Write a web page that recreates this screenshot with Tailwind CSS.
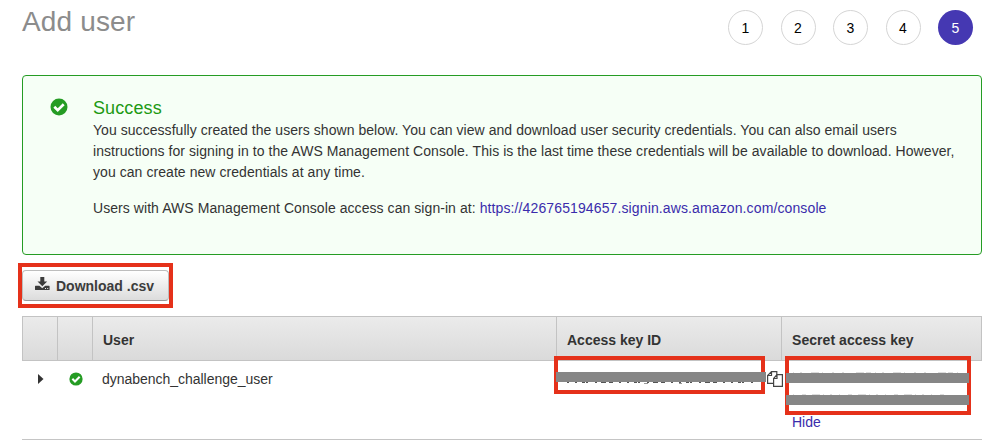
<!DOCTYPE html>
<html lang="en">
<head>
<meta charset="utf-8">
<title>Add user</title>
<script src="https://cdn.jsdelivr.net/npm/@tailwindcss/browser@4"></script>
</head>
<body class="h-[448px] overflow-hidden bg-white font-['Liberation_Sans',Arial,sans-serif] text-[14px] text-[#333]">
<svg class="hidden">
  <symbol id="check" viewBox="0 0 18 18"><circle cx="9" cy="9" r="8.5" fill="#259c24"/><path d="M4.300 8.800 7.700 12.100 13.700 6.200" fill="none" stroke="#fff" stroke-width="2.700"/></symbol>
</svg>
<div class="ml-[22px] w-[960px]">
  <header class="flex h-[75px] items-start justify-between pr-[9px]">
    <h1 class="pt-[6px] text-[28px] leading-[32px] tracking-[0.15px] text-[#8c8c8c]">Add user</h1>
    <ol class="flex gap-[17.5px] pt-[10px] text-black">
      <li class="flex size-[35px] items-center justify-center rounded-full border border-[#d5d5d5] pt-px">1</li>
      <li class="flex size-[35px] items-center justify-center rounded-full border border-[#d5d5d5] pt-px">2</li>
      <li class="flex size-[35px] items-center justify-center rounded-full border border-[#d5d5d5] pt-px">3</li>
      <li class="flex size-[35px] items-center justify-center rounded-full border border-[#d5d5d5] pt-px">4</li>
      <li class="flex size-[35px] items-center justify-center rounded-full bg-[#4538b2] pt-px text-white">5</li>
    </ol>
  </header>
  <section class="flex h-[180px] rounded-[4px] border border-[#259c24] bg-[#f6fff6] pl-[27px]">
    <svg class="mt-[22px] size-[18px] shrink-0"><use href="#check"/></svg>
    <div class="pl-[25px] pt-[21px] leading-[21px] tracking-[0.062px] whitespace-nowrap">
      <h2 class="h-[23px] text-[18px] leading-[22px] tracking-[0.1px] text-[#1c9a12]">Success</h2>
      <p><span class="tracking-[0.052px]">You successfully created the users shown below. You can view and download user security credentials. You can also email users</span><br>instructions for signing in to the AWS Management Console. This is the last time these credentials will be available to download. However,<br>you can create new credentials at any time.</p>
      <p class="mt-[15px]">Users with AWS Management Console access can sign-in at: <a class="tracking-[0.12px] text-[#3a2cac]">https://426765194657.signin.aws.amazon.com/console</a></p>
    </div>
  </section>
  <div class="mt-2 -ml-1 h-[45px] w-[155px] border-4 border-[#e5311a] pt-[3px]">
    <button class="flex h-[31px] w-[147px] items-center rounded-[4px] border border-[#bdbdbd] border-b-[#999] bg-linear-to-b from-white to-[#dcdcdc] pl-[12px] font-bold text-[#3c3c3c]">
      <svg class="mr-[6px] -mt-1 h-[14px] w-[15px]" viewBox="0 0 15 14" fill="#3c3c3c"><path d="M5.300 0h4v4.500h2.900L7.300 9.300 2.500 4.500h2.800z"/><path fill-rule="evenodd" d="M.6 8.800h3.800l2.900 2.400 2.900-2.400h3.800q.6 0 .6.600v3q0 .6-.6.600H.6Q0 13 0 12.400v-3q0-.6.600-.6zM10 11v1h1v-1zm2.200 0v1h1v-1z"/></svg>
      <span class="pt-[2px]">Download .csv</span>
    </button>
  </div>
  <div class="mt-2 border-b border-[#c5c5c5]">
    <div class="grid h-[45px] grid-cols-[35px_35px_464px_225px_201px] overflow-hidden border-y border-r border-[#c3c3c3] bg-linear-to-b from-[#ebebeb] to-[#dadada] text-[14px] leading-[46px] font-bold">
      <div class="border-l border-[#c3c3c3]"></div>
      <div class="border-l border-[#c3c3c3]"></div>
      <div class="border-l border-[#c3c3c3] pl-[10px]">User</div>
      <div class="border-l border-[#c3c3c3] pl-[10px]">Access key ID</div>
      <div class="border-l border-[#c3c3c3] pl-[10px] tracking-[0.06px]">Secret access key</div>
    </div>
    <div class="grid h-[78px] grid-cols-[35px_35px_464px_225px_201px]">
      <div class="pl-[16px] pt-[13px]"><svg class="h-[10px] w-[6px]" viewBox="0 0 6 10" fill="#333"><path d="M0 0 5.500 5 0 10z"/></svg></div>
      <div class="pl-[12px] pt-[11px]"><svg class="size-[14px]"><use href="#check"/></svg></div>
      <div class="pl-[10px] pt-[8px] leading-[21px] tracking-[-0.03px]">dynabench_challenge_user</div>
      <div class="relative">
        <div class="absolute -top-[5px] -left-[2px] h-[38px] w-[211px] border-4 border-[#e5311a]"></div>
        <svg class="absolute top-[21px] left-[11px] h-[2px] w-[186px]" viewBox="0 0 186 2" stroke="#555"><path d="M0 .5H186" stroke-dasharray="2 6 2 5 3 1 2 7 2 4 5 3 4 6"/><path d="M77 1.500h4M112 1.500h3" stroke="#999"/></svg>
        <div class="absolute top-[11px] left-0 h-[10px] w-[210px] bg-[#868686]"></div>
        <svg class="absolute top-[10px] left-[211px] h-[16px] w-[16px]" viewBox="0 0 16 16" fill="#fff" stroke="#444" stroke-width="1.200"><path d="M4.500.6H9.800v11.800H.6V4.500zM4.500.6v3.900H.6"/><path d="M10 3.600h5.400v11.800H6.600V7.500zM10 3.600v3.900H6.600"/></svg>
      </div>
      <div class="relative pt-[51px] pl-[11px] leading-[21px]">
        <div class="absolute -top-[5px] left-[4px] h-[59px] w-[186px] border-4 border-[#e5311a]"></div>
        <svg class="absolute top-[11px] left-[12px] h-[25px] w-[165px]" viewBox="0 0 165 25" stroke="#ddd"><path d="M0 .5h165" stroke-dasharray="1 6 2 9 8 3 1 9 2 8 2 12 8 2 5 4"/><path d="M0 22.500h153" stroke-dasharray="1 8 4 6 8 3 1 6 2 7"/></svg>
        <div class="absolute top-[12px] left-[5px] h-[10px] w-[183px] bg-[#868686]"></div>
        <div class="absolute top-[34px] left-[5px] h-[10px] w-[183px] bg-[#868686]"></div>
        <a class="text-[#3a2cac]">Hide</a>
      </div>
    </div>
  </div>
</div>
</body>
</html>
